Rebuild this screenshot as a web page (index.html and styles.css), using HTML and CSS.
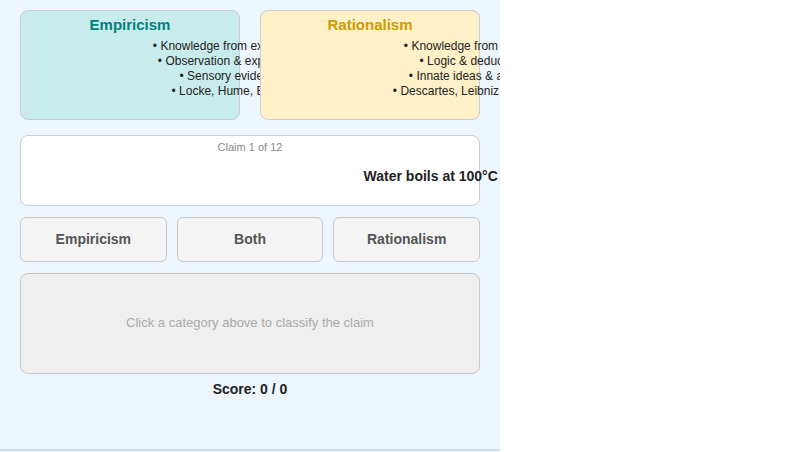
FILE: index.html
```html
<!DOCTYPE html>
<html lang="en">
<head>
    <meta charset="UTF-8">
    <meta name="viewport" content="width=device-width, initial-scale=1.0">
    <title>Empiricism vs Rationalism</title>
    <link rel="stylesheet" href="styles.css">
</head>
<body>
<div class="panel">
    <div class="schools">
        <div class="school empiricism">
            <div class="school-title">Empiricism</div>
            <div class="bullets">
                <div>• Knowledge from experience</div>
                <div>• Observation &amp; experiment</div>
                <div>• Sensory evidence</div>
                <div>• Locke, Hume, Bacon</div>
            </div>
        </div>
        <div class="school rationalism">
            <div class="school-title">Rationalism</div>
            <div class="bullets">
                <div>• Knowledge from reason</div>
                <div>• Logic &amp; deduction</div>
                <div>• Innate ideas &amp; a priori</div>
                <div>• Descartes, Leibniz, Spinoza</div>
            </div>
        </div>
    </div>

    <div class="claim">
        <div class="claim-count">Claim 1 of 12</div>
        <div class="claim-text">Water boils at 100°C at sea level</div>
    </div>

    <div class="choices">
        <button type="button">Empiricism</button>
        <button type="button">Both</button>
        <button type="button">Rationalism</button>
    </div>

    <div class="feedback">Click a category above to classify the claim</div>

    <div class="score">Score: 0 / 0</div>

    <div class="footer-box"></div>
</div>
</body>
</html>
```

FILE: styles.css
```css
body {
    margin: 0;
    font-family: 'Liberation Sans', Arial, sans-serif;
    background: #ffffff;
    color: #222;
}

.panel {
    width: 500px;
    height: 452px;
    background: #eef6fd;
    padding: 10px 20px 0;
    box-sizing: border-box;
    overflow: hidden;
}

.schools {
    display: flex;
    gap: 20px;
}

.school {
    flex: 1 1 0;
    min-width: 0;
    height: 110px;
    box-sizing: border-box;
    border: 1px solid #c8cdd0;
    border-radius: 8px;
    padding: 5px 10px;
}

.empiricism {
    background: #c8ecec;
}

.rationalism {
    background: #fff0c8;
}

.school-title {
    text-align: center;
    font-size: 15px;
    font-weight: bold;
    line-height: 18px;
}

.empiricism .school-title {
    color: #008080;
}

.rationalism .school-title {
    color: #cc9c00;
}

.bullets {
    width: 400px;
    margin-top: 5px;
    text-align: center;
    font-size: 12px;
    line-height: 15px;
    color: #222;
}

.claim {
    margin-top: 15px;
    height: 71px;
    box-sizing: border-box;
    background: #fff;
    border: 1px solid #c8cdd0;
    border-radius: 8px;
    padding-top: 5px;
}

.claim-count {
    text-align: center;
    font-size: 11px;
    color: #888;
}

.claim-text {
    width: 898px;
    margin-top: 15px;
    text-align: center;
    font-size: 14px;
    font-weight: bold;
    color: #222;
}

.choices {
    display: flex;
    gap: 10px;
    margin-top: 11px;
}

.choices button {
    flex: 1 1 0;
    height: 45px;
    padding: 0 0 2px;
    background: #f4f4f4;
    border: 1px solid #c8c8c8;
    border-radius: 6px;
    font-family: inherit;
    font-size: 14px;
    font-weight: bold;
    color: #555;
}

.feedback {
    margin-top: 11px;
    height: 101px;
    box-sizing: border-box;
    padding-bottom: 2px;
    background: #efefef;
    border: 1px solid #c8c8c8;
    border-radius: 8px;
    display: flex;
    align-items: center;
    justify-content: center;
    font-size: 13px;
    color: #aaa;
}

.score {
    margin-top: 7px;
    text-align: center;
    font-size: 14px;
    font-weight: bold;
    color: #222;
}

.footer-box {
    margin: 52px -20px 0;
    height: 40px;
    border-top: 2px solid #d3dae2;
    background: #eef6fd;
}
```
